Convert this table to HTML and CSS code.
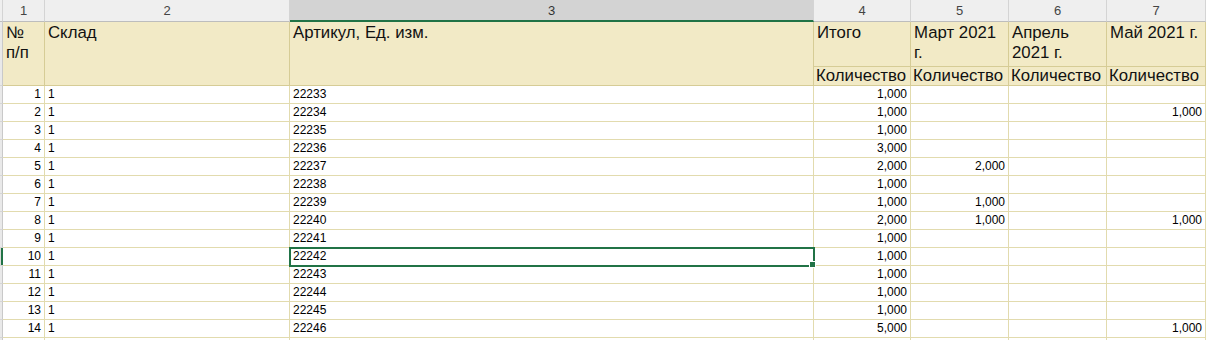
FILE: index.html
```html
<!DOCTYPE html>
<html lang="ru">
<head>
<meta charset="utf-8">
<link rel="stylesheet" href="styles.css">
</head>
<body>
<div class="sheet">
  <div class="gut ch"></div>
  <div class="ch">1</div>
  <div class="ch">2</div>
  <div class="ch sel">3</div>
  <div class="ch">4</div>
  <div class="ch">5</div>
  <div class="ch">6</div>
  <div class="ch last">7</div>

  <div class="gut span2"></div>
  <div class="hd span2">№<br>п/п</div>
  <div class="hd span2">Склад</div>
  <div class="hd span2">Артикул, Ед. изм.</div>
  <div class="hd">Итого</div>
  <div class="hd">Март 2021 г.</div>
  <div class="hd">Апрель 2021 г.</div>
  <div class="hd last">Май 2021 г.</div>
  <div class="hd sub">Количество</div>
  <div class="hd sub">Количество</div>
  <div class="hd sub">Количество</div>
  <div class="hd sub last">Количество</div>
</div>
<div class="sheet body" id="rows"></div>
<script src="app.js"></script>
</body>
</html>
```
FILE: app.js
```js
const data = [
  [1,22233,"1,000","","",""],
  [2,22234,"1,000","","","1,000"],
  [3,22235,"1,000","","",""],
  [4,22236,"3,000","","",""],
  [5,22237,"2,000","2,000","",""],
  [6,22238,"1,000","","",""],
  [7,22239,"1,000","1,000","",""],
  [8,22240,"2,000","1,000","","1,000"],
  [9,22241,"1,000","","",""],
  [10,22242,"1,000","","",""],
  [11,22243,"1,000","","",""],
  [12,22244,"1,000","","",""],
  [13,22245,"1,000","","",""],
  [14,22246,"5,000","","","1,000"]
];
const root = document.getElementById("rows");
let html = "";
for (const r of data) {
  const active = r[0] === 10;
  html += `<div class="gut${active ? " act" : ""}"></div>`;
  html += `<div class="c num">${r[0]}</div>`;
  html += `<div class="c">1</div>`;
  html += `<div class="c${active ? " cur" : ""}">${r[1]}${active ? '<span class="handle"></span>' : ""}</div>`;
  html += `<div class="c num">${r[2]}</div>`;
  html += `<div class="c num">${r[3]}</div>`;
  html += `<div class="c num">${r[4]}</div>`;
  html += `<div class="c num last">${r[5]}</div>`;
}
html += `<div class="gut"></div>` + '<div class="c"></div>'.repeat(7);
root.innerHTML = html;
```
FILE: styles.css
```css
html, body {
  margin: 0;
  padding: 0;
  background: #ffffff;
  overflow: hidden;
}
body {
  font-family: "Liberation Sans", Arial, sans-serif;
  color: #000;
}
.sheet {
  display: grid;
  grid-template-columns: 3px 42px 245px 524px 97px 98px 98px 99px;
  grid-template-rows: 22px 45px 19px;
}
.sheet.body {
  grid-template-rows: none;
  grid-auto-rows: 18px;
}
.gut {
  background: #e9e9e9;
  border-right: 1px solid #c9c9c9;
  border-bottom: 1px solid #d6d6d6;
  box-sizing: border-box;
  position: relative;
}
.gut.act {
  background: #dcdcdc;
}
.gut.act::after {
  content: "";
  position: absolute;
  right: -1px;
  top: 0;
  bottom: 0;
  width: 2px;
  background: #217346;
}
.ch {
  box-sizing: border-box;
  background: #efefef;
  border-right: 1px solid #d4d4d4;
  border-bottom: 1px solid #bdbdbd;
  text-align: center;
  font-size: 13px;
  line-height: 22px;
  color: #444;
}
.ch.sel {
  background: #d3d3d3;
  border-bottom: 2px solid #217346;
  color: #333;
}
.span2 {
  grid-row: span 2;
}
.hd {
  box-sizing: border-box;
  background: #f2eac6;
  border-right: 1px solid #d6cc96;
  border-bottom: 1px solid #d6cc96;
  font-size: 16.8px;
  line-height: 20px;
  padding: 1px 2px 0 3px;
  overflow: hidden;
  color: #111;
}
.hd.sub {
  line-height: 18px;
  padding-top: 0;
  white-space: nowrap;
  padding-left: 2px;
}
.c {
  box-sizing: border-box;
  border-right: 1px solid #e2dbae;
  border-bottom: 1px solid #e2dbae;
  font-size: 12px;
  line-height: 17px;
  padding: 0 3px;
  white-space: nowrap;
  position: relative;
}
.c.num {
  text-align: right;
}
.c.cur {
  outline: 2px solid #217346;
  outline-offset: -1px;
  z-index: 2;
}
.handle {
  position: absolute;
  right: -3px;
  bottom: -3px;
  width: 5px;
  height: 5px;
  background: #217346;
  border: 1px solid #fff;
}
```
